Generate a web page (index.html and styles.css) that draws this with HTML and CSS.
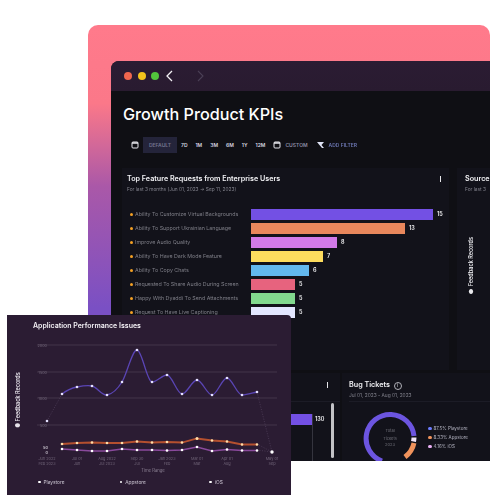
FILE: index.html
```html
<!DOCTYPE html>
<html lang="en">
<head>
<meta charset="UTF-8">
<title>Growth Product KPIs</title>
<link rel="stylesheet" href="styles.css">
</head>
<body>
<div class="stage">
	<div class="backdrop">
		<div class="window">
			<div class="titlebar">
				<span class="light red"></span>
				<span class="light yellow"></span>
				<span class="light green"></span>
				<svg class="nav" width="12" height="14" viewBox="0 0 12 14"><path d="M8 2 3 7l5 5" fill="none" stroke="#f4f2f6" stroke-width="1.3"/></svg>
				<svg class="nav nav-next" width="12" height="14" viewBox="0 0 12 14"><path d="M4 2l5 5-5 5" fill="none" stroke="#4a3f55" stroke-width="1.1"/></svg>
			</div>
			<div class="content">
				<h1 class="page-title">Growth Product KPIs</h1>
				<div class="toolbar">
					<svg class="tool-icon" width="8" height="8" viewBox="0 0 8 8"><rect x="1" y="1" width="6" height="6" rx="1" fill="none" stroke="#e8e8ee"/><path d="M1 2h6" stroke="#e8e8ee" stroke-width="1.4"/></svg>
					<span class="chip">DEFAULT</span>
					<span class="range r7">7D</span>
					<span class="range">1M</span>
					<span class="range">3M</span>
					<span class="range">6M</span>
					<span class="range">1Y</span>
					<span class="range">12M</span>
					<svg class="tool-icon" width="8" height="8" viewBox="0 0 8 8"><rect x="1" y="1" width="6" height="6" rx="1" fill="none" stroke="#e8e8ee"/><path d="M1 2h6" stroke="#e8e8ee" stroke-width="1.6"/></svg>
					<span class="range dim">CUSTOM</span>
					<svg class="tool-icon filter" width="8" height="8" viewBox="0 0 8 8"><path d="M0 1h7L4.500 4 7 7H5L2 3.500z" fill="#dfe3f5"/></svg>
					<span class="range blue">ADD FILTER</span>
				</div>
				<div class="row row-top">
					<section class="panel panel-features">
						<div class="panel-head">
							<div>
								<h2 class="panel-title">Top Feature Requests from Enterprise Users</h2>
								<p class="panel-sub">For last 3 months (Jun 01, 2023 → Sep 11, 2023)</p>
							</div>
							<span class="kebab"></span>
						</div>
						<div class="bars">
							<div class="bar-label">Ability To Customize Virtual Backgrounds</div>
							<div class="bar-cell"><span class="bar c-purple" style="width:182px"></span><span class="bar-value">15</span></div>
							<div class="bar-label">Ability To Support Ukrainian Language</div>
							<div class="bar-cell"><span class="bar c-orange" style="width:154px"></span><span class="bar-value">13</span></div>
							<div class="bar-label">Improve Audio Quality</div>
							<div class="bar-cell"><span class="bar c-pink" style="width:86px"></span><span class="bar-value">8</span></div>
							<div class="bar-label">Ability To Have Dark Mode Feature</div>
							<div class="bar-cell"><span class="bar c-yellow" style="width:72px"></span><span class="bar-value">7</span></div>
							<div class="bar-label">Ability To Copy Chats</div>
							<div class="bar-cell"><span class="bar c-blue" style="width:58px"></span><span class="bar-value">6</span></div>
							<div class="bar-label">Requested To Share Audio During Screen</div>
							<div class="bar-cell"><span class="bar c-red" style="width:44px"></span><span class="bar-value">5</span></div>
							<div class="bar-label">Happy With Dyaddi To Send Attachments</div>
							<div class="bar-cell"><span class="bar c-green" style="width:44px"></span><span class="bar-value">5</span></div>
							<div class="bar-label">Request To Have Live Captioning</div>
							<div class="bar-cell"><span class="bar c-white" style="width:44px"></span><span class="bar-value">5</span></div>
						</div>
					</section>
					<section class="panel panel-source">
						<h2 class="panel-title">Source</h2>
						<p class="panel-sub">For last 3</p>
						<div class="axis-title">● Feedback Records</div>
					</section>
				</div>
				<div class="row row-bottom">
					<section class="panel panel-hidden">
						<div class="panel-head head-line">
							<h2 class="panel-title">Sources</h2>
							<span class="kebab"></span>
						</div>
						<div class="hbar-body">
							<span class="hbar"></span>
							<span class="bar-value">130</span>
							<span class="scroll"></span>
						</div>
					</section>
					<section class="panel panel-bugs">
						<div class="panel-head head-line">
							<div>
								<h2 class="panel-title">Bug Tickets <span class="info">i</span></h2>
								<p class="panel-sub">Jul 01, 2023 - Aug 01, 2023</p>
							</div>
						</div>
						<div class="donut-body">
							<svg class="donut" width="56" height="56" viewBox="0 0 56 56">
								<g fill="none" stroke-width="5">
									<path d="M52 26A24 24 0 1 0 20 51" stroke="#6c55e0"/>
									<path d="M52 33A24 24 0 0 1 43 47" stroke="#f0935c"/>
									<path d="M52 27.500A24 24 0 0 1 51.500 31.500" stroke="#f2e6f7"/>
								</g>
								<text x="28" y="22" class="donut-text">Total</text>
								<text x="28" y="30" class="donut-text">Tickets</text>
								<text x="28" y="36" class="donut-text">2023</text>
							</svg>
							<ul class="legend">
								<li><span class="dot d-blue"></span>87.5% Playstore</li>
								<li><span class="dot d-orange"></span>8.33% Appstore</li>
								<li><span class="dot d-pink"></span>4.16% iOS</li>
							</ul>
						</div>
					</section>
				</div>
			</div>
		</div>
	</div>

	<div class="float-card">
		<h3 class="float-title">Application Performance Issues</h3>
		<svg class="chart" width="284" height="152" viewBox="7 338 284 152">
			<g class="grid">
				<line x1="37" y1="345" x2="277" y2="345"/>
				<line x1="37" y1="372" x2="277" y2="372"/>
				<line x1="37" y1="398" x2="277" y2="398"/>
				<line x1="37" y1="425" x2="277" y2="425"/>
			</g>
			<g class="tick">
				<text x="47" y="347">2000</text>
				<text x="47" y="374">1500</text>
				<text x="47" y="400">1000</text>
				<text x="47" y="427">500</text>
			</g>
			<text class="y-title" transform="translate(20 400) rotate(-90)">● Feedback Records</text>
			<text class="y-small" x="48" y="449">50</text>
			<text class="y-small" x="48" y="454">0</text>

			<path class="dash" d="M47 421 62 394M257 392 272 452"/>
			<path class="dash" d="M257 444 272 452M257 450 272 452"/>
			<path class="line-purple" d="M62 394C67 390 72 388 77 387S87 385 92 386S102 396 107 395S117 390 122 382S132 350 137 350S147 382 152 382S162 375 167 375S177 394 182 394S192 380 197 380S207 395 212 395S222 378 227 378S237 395 242 395S252 393 257 392"/>
			<path class="line-orange" d="M62 444 77 443 92 442.500 107 443 122 443 137 441.500 152 442.500 167 442 182 442.500 197 438.500 212 440.500 227 441.500 242 444.500 257 444.500"/>
			<path class="line-pink" d="M62 449 77 450 92 451 107 451 122 449 137 450 152 450 167 450.500 182 450 197 447 212 451 227 449.500 242 450.500 257 450.500"/>

			<g class="pts pts-purple">
				<circle cx="47" cy="421" r="1.300"/><circle cx="62" cy="394" r="1.300"/><circle cx="77" cy="387" r="1.300"/><circle cx="92" cy="386" r="1.300"/><circle cx="107" cy="395" r="1.300"/><circle cx="122" cy="382" r="1.300"/><circle cx="137" cy="350" r="1.300"/><circle cx="152" cy="382" r="1.300"/><circle cx="167" cy="375" r="1.300"/><circle cx="182" cy="394" r="1.300"/><circle cx="197" cy="380" r="1.300"/><circle cx="212" cy="395" r="1.300"/><circle cx="227" cy="378" r="1.300"/><circle cx="242" cy="395" r="1.300"/><circle cx="257" cy="392" r="1.300"/>
			</g>
			<g class="pts pts-orange">
				<circle cx="62" cy="444" r="1.300"/><circle cx="77" cy="443" r="1.300"/><circle cx="92" cy="442.500" r="1.300"/><circle cx="107" cy="443" r="1.300"/><circle cx="122" cy="443" r="1.300"/><circle cx="137" cy="441.500" r="1.300"/><circle cx="152" cy="442.500" r="1.300"/><circle cx="167" cy="442" r="1.300"/><circle cx="182" cy="442.500" r="1.300"/><circle cx="197" cy="438.500" r="1.500"/><circle cx="212" cy="440.500" r="1.300"/><circle cx="227" cy="441.500" r="1.300"/><circle cx="242" cy="444.500" r="1.300"/><circle cx="257" cy="444.500" r="1.300"/>
			</g>
			<g class="pts">
				<circle cx="62" cy="449" r="1.300"/><circle cx="77" cy="450" r="1.300"/><circle cx="92" cy="451" r="1.300"/><circle cx="107" cy="451" r="1.300"/><circle cx="122" cy="449" r="1.300"/><circle cx="137" cy="450" r="1.300"/><circle cx="152" cy="450" r="1.300"/><circle cx="167" cy="450.500" r="1.300"/><circle cx="182" cy="450" r="1.300"/><circle cx="197" cy="447" r="1.300"/><circle cx="212" cy="451" r="1.300"/><circle cx="227" cy="449.500" r="1.300"/><circle cx="242" cy="450.500" r="1.300"/><circle cx="257" cy="450.500" r="1.300"/><circle cx="272" cy="452" r="1.700"/>
			</g>
			<g class="tick tick-x">
				<text x="47" y="460">Jun 2022</text><text x="47" y="465">Feb 2023</text>
				<text x="77" y="460">Jul 01</text><text x="77" y="465">Jun</text>
				<text x="107" y="460">Aug 2022</text><text x="107" y="465">Jul 2023</text>
				<text x="137" y="460">Sep 30</text><text x="137" y="465">Jul</text>
				<text x="167" y="460">Jan 2023</text><text x="167" y="465">Feb</text>
				<text x="197" y="460">Mar 01</text><text x="197" y="465">Mar</text>
				<text x="227" y="460">Apr 01</text><text x="227" y="465">Aug</text>
				<text x="272" y="460">May 01</text><text x="272" y="465">Sep</text>
			</g>
			<text class="x-title" x="153" y="471.500">Time Range</text>
		</svg>
		<div class="float-legend">
			<span class="legend-item"><span class="mini-dot"></span>Playstore</span>
			<span class="legend-item item-wide"><span class="mini-dot"></span>Appstore</span>
			<span class="legend-item"><span class="mini-dot"></span>iOS</span>
		</div>
	</div>
</div>
</body>
</html>
```

FILE: styles.css
```css
html,body,div,h1,h2,h3,p,ul,li { margin:0; padding:0; }
html,body { width:100%; height:100%; background:#fff; overflow:hidden; }
body { font-family:"Inter","Liberation Sans",sans-serif; }

.stage { position:relative; width:500px; height:500px; padding-top:25px; box-sizing:border-box; filter:blur(.4px); }

.backdrop { width:402px; height:400px; margin-left:88px; padding-top:36px; border-radius:10px 10px 0 0; background:linear-gradient(180deg,#ff7a8b 0%,#fb7889 18%,#aa58a8 37%,#7a50c4 65%); }

.window { margin-left:23px; height:400px; border-radius:8px 0 0 0; overflow:hidden; background:#0f0f14; }

.titlebar { height:30px; display:flex; align-items:center; padding-left:13px; background:linear-gradient(180deg,#2b1c33,#291b30); }
.light { width:8px; height:8px; border-radius:50%; margin-right:5.500px; }
.red { background:#f0664e; }
.yellow { background:#f3c31c; }
.green { background:#52c63c; }
.nav { margin-left:-1px; }
.nav-next { margin-left:18px; }

.content { padding-left:11px; }
.page-title { font-size:16.200px; line-height:22px; font-weight:500; color:#fff; padding:12px 0 0 1px; }

.toolbar { display:flex; align-items:center; height:16px; margin-top:12px; padding-left:9px; font-size:5px; font-weight:600; color:#d8d8e2; }
.tool-icon { margin-right:4px; flex:none; }
.chip { width:34px; height:16px; line-height:16px; text-align:center; background:#24243a; color:#73748e; margin-right:4px; }
.range { margin-right:8px; }
.dim { color:#8c8ca4; margin-right:9px; }
.blue { color:#6d78b5; margin-left:1px; }
.filter { margin-right:3px; }

.row { display:flex; }
.row-top { margin-top:15px; height:202px; }
.row-bottom { height:90px; margin-top:3px; }

.panel { background:#12121a; flex:none; }
.panel-features { width:327px; margin-right:8px; padding:6px 0 0 5px; box-sizing:border-box; }
.panel-source { width:60px; padding:6px 0 0 8px; box-sizing:border-box; }
.panel-hidden { width:218px; margin-right:2px; }
.panel-bugs { width:149px; padding-left:7px; box-sizing:border-box; }

.panel-head { display:flex; justify-content:space-between; align-items:flex-start; }
.head-line { height:29px; padding-top:7px; box-sizing:border-box; border-bottom:1px solid #1c1c26; }
.panel-hidden .head-line { padding-right:12px; justify-content:flex-end; }
.panel-hidden .panel-title { display:none; }
.panel-title { font-size:7.200px; line-height:10px; font-weight:600; color:#f2f2f5; white-space:nowrap; }
.panel-sub { font-size:4.800px; line-height:8px; margin-top:1px; color:#85858f; white-space:nowrap; }
.kebab { width:1.500px; height:6px; margin:2px 8px 0 0; background:#e6e6ea; }
.panel-hidden .kebab { margin-right:0; }
.info { display:inline-block; width:6px; height:6px; border:1px solid #b0b0b8; border-radius:50%; font-size:4px; line-height:6px; text-align:center; font-weight:400; vertical-align:0; margin-left:2px; }

.bars { display:grid; grid-template-columns:124px 1fr; grid-auto-rows:14px; margin-top:14px; align-items:center; }
.bar-label { position:relative; padding-left:8px; font-size:5.300px; color:#7f7f88; white-space:nowrap; overflow:hidden; }
.bar-label::before { content:""; position:absolute; left:2.500px; top:50%; width:3px; height:3px; margin-top:-1.500px; border-radius:50%; background:#f3a024; }
.bar-cell { display:flex; align-items:center; }
.bar { display:block; height:11px; }
.bar-value { margin-left:4px; font-size:5.500px; font-weight:600; color:#f0f0f2; }
.c-purple { background:#7350e4; }
.c-orange { background:#e8875c; }
.c-pink { background:#d27ae8; }
.c-yellow { background:#fddc5e; }
.c-blue { background:#62b8ee; }
.c-red { background:#e7637e; }
.c-green { background:#82d98e; }
.c-white { background:#e3e6ff; }

.axis-title { writing-mode:vertical-rl; transform:rotate(180deg); font-size:5.500px; font-weight:600; color:#e8e8ec; margin:44px 0 0 3px; white-space:nowrap; }

.hbar-body { display:flex; height:61px; padding-top:12px; box-sizing:border-box; align-items:flex-start; }
.hbar { position:relative; width:190px; height:11px; background:#7350e4; }
.hbar::after { content:""; position:absolute; right:-1px; top:0; width:1px; height:60px; background:#34343e; }
.hbar-body .bar-value { margin:2px 0 0 3px; }
.scroll { width:3px; height:55px; margin:-11px 0 0 7px; background:#c4c4c8; border-radius:2px; }

.donut-body { display:flex; }
.donut { margin:8px 0 0 13px; flex:none; overflow:hidden; }
.donut-text { font-size:4px; fill:#6f6f78; text-anchor:middle; }
.legend { list-style:none; margin:22px 0 0 10px; font-size:4.500px; line-height:9px; color:#b6b6c4; white-space:nowrap; }
.dot { display:inline-block; width:3.500px; height:3.500px; border-radius:50%; margin-right:2px; }
.d-blue { background:#6c7cff; }
.d-orange { background:#f0935c; }
.d-pink { background:#eab0f5; }

.float-card { position:absolute; left:7px; top:315px; width:284px; height:180px; background:#2b1c33; border-radius:0 4px 0 0; overflow:hidden; }
.float-title { font-size:7px; line-height:10px; font-weight:600; color:#f4f1f6; padding:6px 0 0 26px; white-space:nowrap; }
.chart { display:block; margin-top:7px; }
.grid line { stroke:#4a3c52; stroke-width:.8; }
.tick text { font-size:3.800px; fill:#6f6377; text-anchor:end; }
.tick-x text { text-anchor:middle; }
.y-title { font-size:5.500px; font-weight:600; fill:#e6e2ea; text-anchor:middle; }
.y-small { font-size:4px; fill:#e6e2ea; text-anchor:end; }
.x-title { font-size:4.200px; fill:#8a7f92; text-anchor:middle; }
.dash { fill:none; stroke:#5a4a66; stroke-width:.6; stroke-dasharray:1 1.500; }
.line-purple { fill:none; stroke:#5a45b4; stroke-width:1.300; }
.line-orange { fill:none; stroke:#b5502f; stroke-width:1.800; }
.line-pink { fill:none; stroke:#8a4a9c; stroke-width:1.600; }
.pts circle { fill:#fff; }
.pts-purple circle { fill:#e4e0ff; }
.pts-orange circle { fill:#ffdca8; }

.float-legend { display:flex; font-size:4.800px; color:#cfc9d6; margin-top:-11px; padding-left:31px; position:relative; }
.legend-item { display:flex; align-items:center; width:91px; }
.item-wide { width:100px; }
.mini-dot { width:2.500px; height:2.500px; border-radius:50%; background:#fff; margin-right:3px; }
```
